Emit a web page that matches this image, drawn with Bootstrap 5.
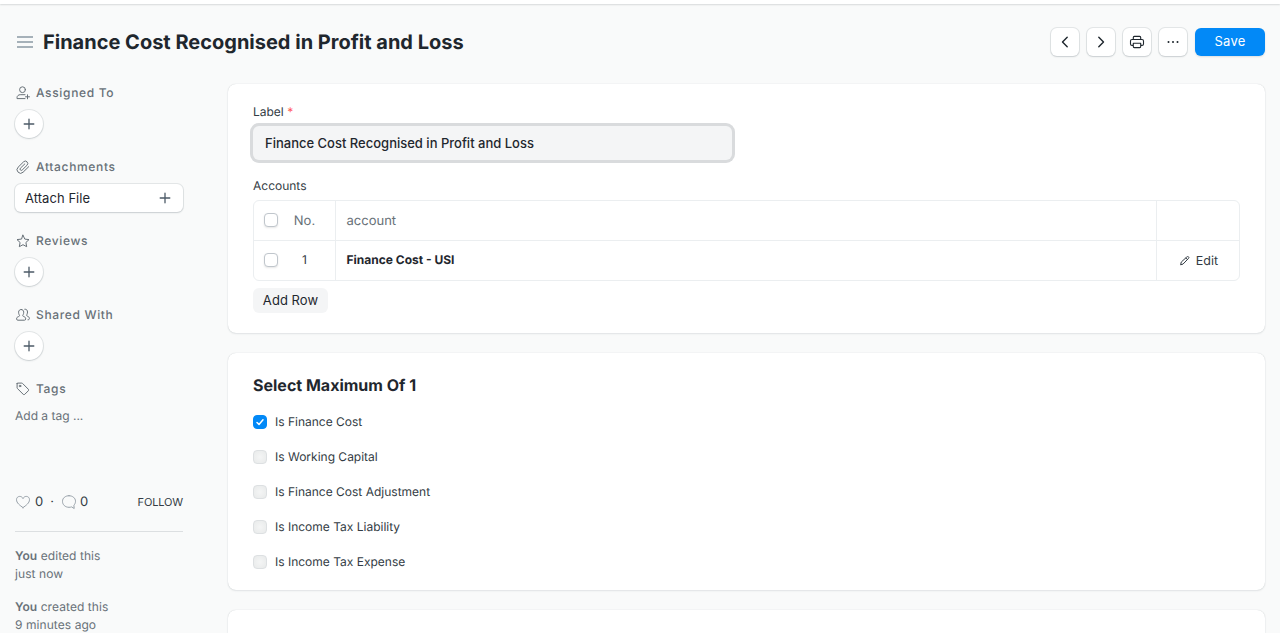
<!DOCTYPE html>
<html lang="en">
<head>
<meta charset="utf-8">
<meta name="viewport" content="width=device-width, initial-scale=1">
<title>Finance Cost Recognised in Profit and Loss</title>
<link href="https://cdn.jsdelivr.net/npm/bootstrap@5.3.0/dist/css/bootstrap.min.css" rel="stylesheet">
<style>
:root{--ink:#1f272e;--ink2:#4c5a67;--muted:#687178;--line:#ebeef0}
html,body{height:100%;overflow:hidden}
body{font-family:Inter,"Noto Sans",sans-serif;font-size:13px;line-height:18px;color:var(--ink);background:#f9fafa;text-rendering:geometricPrecision}
svg{display:block;flex:none;fill:none;stroke:currentColor;stroke-linecap:round;stroke-linejoin:round}
.topbar{height:4px;box-shadow:0 1px 2px rgba(25,39,52,.14),0 0 1px rgba(25,39,52,.12)}
.pagehead{height:76px;padding:0 15px}
.burger{color:#a6b1b9;margin:0 10px 0 2px;stroke-linecap:butt}
.pagehead h1{font-size:20px;line-height:30px;font-weight:700;color:var(--ink)}
.raised{background:#fff;box-shadow:0 0 0 1px rgba(25,39,52,.09),0 1px 2px rgba(25,39,52,.13)}
.btn-tool{width:28px;height:28px;border:0;border-radius:6px;padding:0;color:var(--ink)}
.btn-save{width:70px;height:28px;padding:0 0 2px;border:0;border-radius:6px;background:#0289f7;color:#fff;font-size:13px;line-height:18px;letter-spacing:.2px;box-shadow:0 1px 2px rgba(25,39,52,.13)}
.layout{padding:0 15px}
.sidebar{width:168px;margin-right:45px}
.side-item{height:74px}
.side-label{height:18px;font-size:12px;font-weight:500;letter-spacing:.66px;color:var(--muted)}
.side-label svg{margin:0 6px 0 1px}
.btn-add{width:28px;height:28px;border:0;border-radius:50%;padding:0;margin-top:8px;color:var(--ink2)}
.btn-attach{width:168px;height:28px;border:0;border-radius:6px;margin-top:8px;padding:0 12px 0 10px;font-size:13px;line-height:18px;letter-spacing:.05px;color:var(--ink)}
.btn-attach svg{color:var(--ink2)}
.tagline{font-size:12px;margin-top:9px;color:var(--muted)}
.stats{margin-top:68px;height:18px;color:#98a1a9}
.stats .follow{font-size:11px;color:#333c44;letter-spacing:-.15px}
.stats .count{color:#333c44;font-size:13px}
.stats .dot{margin:0 7px 0 7px}
.stats .replies{margin-left:3px}
.sep{height:1px;background:#dcdfe1;margin:20px 0 15px}
.audit{font-size:12px;color:var(--muted);letter-spacing:.07px;margin-bottom:15px}
.audit:last-child{margin-bottom:0}
.audit b{font-weight:600}
.panel{border-radius:8px;background:#fff;box-shadow:0 0 1px rgba(25,39,52,.22),0 1px 2px rgba(25,39,52,.09);padding:0 25px;margin-bottom:20px}
.panel-main{height:249px;padding-top:19px}
.panel-options{height:237px;padding-top:20px}
.panel-next{height:23px;margin:0;border-radius:8px 8px 0 0}
.field-label{font-size:12px;line-height:18px;color:#333c44;margin-bottom:5px}
.req{color:#ff5858}
.field{width:479px;height:34px;border:0;border-radius:6px;background:#f4f5f6;box-shadow:0 0 0 3px #d9dbdd;padding:0 12px;font-size:13px;font-weight:500;color:var(--ink);margin-bottom:17px}
.field:focus{background:#f4f5f6;box-shadow:0 0 0 3px #d9dbdd;color:var(--ink)}
.gridbox{border:1px solid var(--line);border-radius:6px;height:81px}
.gridrow{height:39px}
.gridrow>*{padding-bottom:1px}
.gridrow+.gridrow{border-top:1px solid var(--line);height:40px}
.gridrow.head{color:var(--muted)}
.gridrow.head .n,.gridrow.head .c-acc{padding-top:1px;padding-bottom:0}
.c-no{width:82px;padding-left:10px;border-right:1px solid var(--line)}
.c-no .n{width:53px;text-align:center}
.c-no .idx{font-size:12px;color:#333c44}
.c-acc{padding-left:10.5px}
.c-acc.val{font-size:12px;padding-bottom:2px}
.gridrow .c-edit{width:83px;border-left:1px solid var(--line);font-size:12.500px;gap:5px;color:#333c44;padding:2px 0 0 1px}
.c-edit svg{margin-top:-1px}
.form-check-input.box{width:14px;height:14px;margin:0;border:1px solid #c0c6cc;border-radius:4px;flex:none;box-shadow:0 1px 2px rgba(0,0,0,.1);background-color:#fff}
.form-check-input.box.off{opacity:1;border-color:#dde0e2;background:radial-gradient(#f4f5f5,#e8eaea);box-shadow:none}
.form-check-input.box:checked{border-color:#0289f7;background-color:#0289f7;background-image:url("data:image/svg+xml,%3csvg xmlns='http://www.w3.org/2000/svg' viewBox='0 0 12 12'%3e%3cpath fill='none' stroke='%23fff' stroke-width='1.5' stroke-linecap='round' stroke-linejoin='round' d='M3 6.500l2 1.900 4-4.700'/%3e%3c/svg%3e");box-shadow:none}
.btn-row{display:block;height:25px;border:0;border-radius:6px;background:#f4f5f6;width:75px;padding:0 0 1px;margin-top:7px;font-size:13px;line-height:18px;letter-spacing:.05px;color:var(--ink)}
.panel h2{font-size:16px;line-height:24px;font-weight:700}
.checks{gap:17px}
.checks label{gap:8px;height:18px;font-size:12px;color:#333c44}
</style>
</head>
<body>
<header class="topbar bg-white"></header>
<div class="pagehead d-flex align-items-center">
  <svg class="burger" width="16" height="16" viewBox="0 0 16 16" stroke-width="2"><path d="M0 3h16M0 8h16M0 13h16"/></svg>
  <h1 class="m-0 me-auto">Finance Cost Recognised in Profit and Loss</h1>
  <div class="d-flex gap-2">
    <button class="btn btn-tool raised d-flex align-items-center justify-content-center" aria-label="Previous"><svg width="16" height="16" viewBox="0 0 16 16" stroke-width="1.4"><path d="M10.2 3.2L5.5 8l4.7 4.8"/></svg></button>
    <button class="btn btn-tool raised d-flex align-items-center justify-content-center" aria-label="Next"><svg width="16" height="16" viewBox="0 0 16 16" stroke-width="1.4"><path d="M5.8 3.2L10.5 8l-4.7 4.8"/></svg></button>
    <button class="btn btn-tool raised d-flex align-items-center justify-content-center" aria-label="Print"><svg width="16" height="16" viewBox="0 0 16 16" stroke-width="1.1"><path d="M4.3 5.500V3.400c0-.6.4-1 1-1h5.400c.6 0 1 .4 1 1v2.100M4.300 11.400H3c-.8 0-1.500-.6-1.500-1.400V7c0-.8.7-1.500 1.500-1.500h10c.8 0 1.500.7 1.500 1.500v3c0 .8-.7 1.400-1.500 1.400h-1.300M4.300 9.200h7.400v3.400c0 .6-.4 1-1 1H5.300c-.6 0-1-.4-1-1z"/></svg></button>
    <button class="btn btn-tool raised d-flex align-items-center justify-content-center" aria-label="More"><svg width="16" height="16" viewBox="0 0 16 16"><path stroke-width="2" d="M3.500 8h.01M8 8h.01M12.500 8h.01"/></svg></button>
    <button class="btn btn-save">Save</button>
  </div>
</div>
<div class="layout d-flex">
  <aside class="sidebar flex-shrink-0 pt-1">
    <div class="side-item"><div class="side-label d-flex align-items-center"><svg width="14" height="14" viewBox="0 0 14 14"><circle cx="6.500" cy="3.700" r="2.900"/><path d="M9 8.700H4.200C2.400 8.700 1 10 1 11.700v.9h8M11.500 8.800v4M9.500 10.800h4"/></svg>Assigned To</div>
      <button class="btn btn-add raised d-flex align-items-center justify-content-center" aria-label="Assign"><svg width="12" height="12" viewBox="0 0 12 12" stroke-width="1.300"><path d="M6 1.200v9.600M1.200 6h9.600"/></svg></button></div>
    <div class="side-item"><div class="side-label d-flex align-items-center"><svg width="14" height="14" viewBox="0 0 14 14"><path d="M12.700 6.700l-5.600 5.500a3.500 3.500 0 0 1-5-5l5.500-5.400a2.400 2.400 0 0 1 3.400 0 2.500 2.500 0 0 1 0 3.500L6.200 10a1.250 1.250 0 0 1-1.800-1.800L8.800 3.900"/></svg>Attachments</div>
      <button class="btn btn-attach raised d-flex align-items-center justify-content-between"><span>Attach File</span><svg width="12" height="12" viewBox="0 0 12 12" stroke-width="1.300"><path d="M6 1.200v9.600M1.200 6h9.600"/></svg></button></div>
    <div class="side-item"><div class="side-label d-flex align-items-center"><svg width="14" height="14" viewBox="0 0 14 14"><path d="M7 1.200l1.800 3.900 4.200.5-3.100 2.900.8 4.200L7 10.700l-3.700 2 .8-4.200L1 5.600l4.200-.5z"/></svg>Reviews</div>
      <button class="btn btn-add raised d-flex align-items-center justify-content-center" aria-label="Review"><svg width="12" height="12" viewBox="0 0 12 12" stroke-width="1.300"><path d="M6 1.200v9.600M1.200 6h9.600"/></svg></button></div>
    <div class="side-item"><div class="side-label d-flex align-items-center"><svg width="14" height="14" viewBox="0 0 14 14"><path d="M5.200 1.500c1.500 0 2.500 1 2.500 2.700 0 1.900-.7 2.700-.9 3.200-.2.700.3.900 1 1.200 1.300.5 1.900.9 1.900 2.300 0 .8-.4 1.300-1.200 1.300H1.800c-.8 0-1.200-.5-1.200-1.300 0-1.400.6-1.800 1.900-2.300.7-.3 1.200-.5 1-1.200-.2-.5-.9-1.300-.9-3.200 0-1.700 1.100-2.700 2.600-2.700zM8.800 1.200c1.700-.2 2.700 1 2.700 2.800 0 1.600-.6 2.500-.8 3-.2.700.2 1 .9 1.300 1.200.5 1.800.9 1.800 2.300 0 .8-.5 1.200-1.400 1.200"/></svg>Shared With</div>
      <button class="btn btn-add raised d-flex align-items-center justify-content-center" aria-label="Share"><svg width="12" height="12" viewBox="0 0 12 12" stroke-width="1.300"><path d="M6 1.200v9.600M1.200 6h9.600"/></svg></button></div>
    <div><div class="side-label d-flex align-items-center"><svg width="14" height="14" viewBox="0 0 14 14"><path d="M1.100 1.600v4.200c0 .3.100.5.300.7l5.900 5.900c.4.400 1 .4 1.400 0l3.700-3.700c.4-.4.400-1 0-1.400L6.500 1.400a1 1 0 0 0-.7-.3H1.600c-.3 0-.5.200-.5.500z"/><circle cx="4" cy="4" r=".8"/></svg>Tags</div>
      <div class="tagline">Add a tag ...</div></div>
    <div class="stats d-flex align-items-center"><svg width="16" height="16" viewBox="0 0 16 16"><path d="M8 13.600C5 11.500 1.500 9 1.500 5.700c0-2 1.400-3.300 3.200-3.300C6.200 2.400 7.400 3.200 8 4.600c.6-1.400 1.800-2.200 3.300-2.200 1.800 0 3.200 1.300 3.200 3.300 0 3.300-3.500 5.800-6.500 7.900z"/></svg><span class="count ms-1">0</span><span class="count dot">·</span><svg width="16" height="16" viewBox="0 0 16 16"><path d="M8 1.700c3.800 0 6.500 2.500 6.500 5.600 0 1.500-.6 2.900-1.600 3.900l.3 3.300-2.600-1.600c-.8.300-1.700.4-2.600.4-3.800 0-6.500-2.600-6.500-5.900S4.200 1.700 8 1.700z"/></svg><span class="count replies">0</span><span class="follow ms-auto">FOLLOW</span></div>
    <div class="sep"></div>
    <div class="audit"><b>You</b> edited this<br>just now</div>
    <div class="audit"><b>You</b> created this<br>9 minutes ago</div>
  </aside>
  <main class="flex-grow-1 pt-1">
    <section class="panel panel-main">
      <div class="field-label">Label <span class="req">*</span></div>
      <input class="form-control field" type="text" value="Finance Cost Recognised in Profit and Loss" aria-label="Label">
      <div class="field-label">Accounts</div>
      <div class="gridbox">
        <div class="gridrow head d-flex">
          <div class="c-no d-flex align-items-center"><input class="form-check-input box" type="checkbox" aria-label="Select all"><span class="n">No.</span></div>
          <div class="c-acc d-flex align-items-center flex-grow-1">account</div>
          <div class="c-edit"></div>
        </div>
        <div class="gridrow d-flex">
          <div class="c-no d-flex align-items-center"><input class="form-check-input box" type="checkbox" aria-label="Select row"><span class="n idx">1</span></div>
          <div class="c-acc val d-flex align-items-center flex-grow-1 fw-bold">Finance Cost - USI</div>
          <div class="c-edit d-flex align-items-center justify-content-center"><svg width="12" height="12" viewBox="0 0 12 12"><path d="M7.900 1.900c.5-.5 1.100-.5 1.600-.1.500.5.500 1.100 0 1.600L4 9.100l-2.400.7.600-2.400zM6.900 3l1.600 1.600"/></svg>Edit</div>
        </div>
      </div>
      <button class="btn btn-row">Add Row</button>
    </section>
    <section class="panel panel-options">
      <h2 class="m-0 mb-3">Select Maximum Of 1</h2>
      <div class="checks d-flex flex-column">
        <label class="d-flex align-items-center"><input class="form-check-input box" type="checkbox" checked>Is Finance Cost</label>
        <label class="d-flex align-items-center"><input class="form-check-input box off" type="checkbox" disabled>Is Working Capital</label>
        <label class="d-flex align-items-center"><input class="form-check-input box off" type="checkbox" disabled>Is Finance Cost Adjustment</label>
        <label class="d-flex align-items-center"><input class="form-check-input box off" type="checkbox" disabled>Is Income Tax Liability</label>
        <label class="d-flex align-items-center"><input class="form-check-input box off" type="checkbox" disabled>Is Income Tax Expense</label>
      </div>
    </section>
    <section class="panel panel-next"></section>
  </main>
</div>
<script src="https://cdn.jsdelivr.net/npm/bootstrap@5.3.0/dist/js/bootstrap.bundle.min.js"></script>
</body>
</html>
